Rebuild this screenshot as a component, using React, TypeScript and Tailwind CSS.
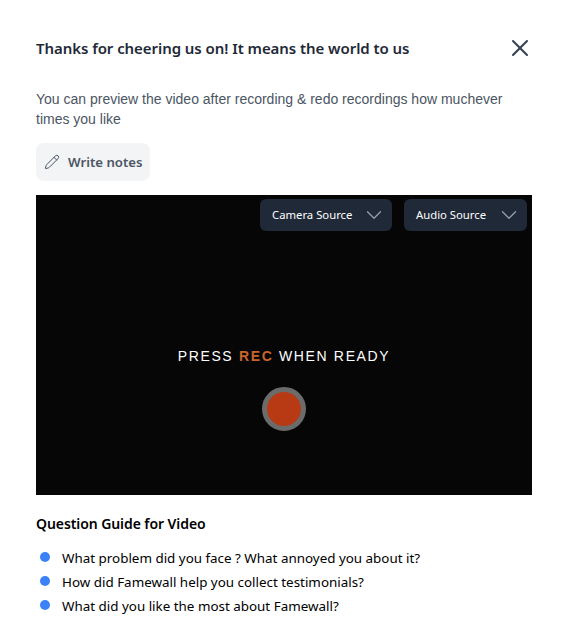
import { X, ChevronDown, Pencil } from "lucide-react";

const questions = [
  "What problem did you face ? What annoyed you about it?",
  "How did Famewall help you collect testimonials?",
  "What did you like the most about Famewall?",
];

function SourceSelect({ label, width }: { label: string; width: string }) {
  return (
    <div className={`flex h-8 items-center justify-between rounded-md bg-[#1f2937] pl-3 pr-[5px] text-white ${width}`}>
      <span className="pt-px text-[11.3px]">{label}</span>
      <ChevronDown size={26} strokeWidth={1.1} className="text-gray-400" />
    </div>
  );
}

export default function App() {
  return (
    <div className="h-[637px] w-[568px] overflow-hidden bg-white px-9 pt-[36px] font-['Noto_Sans',sans-serif]">
      {/* Header */}
      <div className="flex h-6 items-center justify-between">
        <h2 className="text-[15px] font-semibold tracking-[-0.06px] text-[#1f2937]">
          Thanks for cheering us on! It means the world to us
        </h2>
        <X size={28} strokeWidth={1.75} className="-mr-[2px] text-[#374151]" />
      </div>

      <p className="mt-[29px] font-['Liberation_Sans',sans-serif] text-sm leading-[20px] text-[#4b5563]">
        You can preview the video after recording &amp; redo recordings how muchever times you like
      </p>

      <button className="mt-[14px] flex h-[38px] w-[114px] items-center gap-[8px] rounded-lg bg-[#f3f4f6] pl-[8px] text-[13.2px] font-semibold text-[#4b5563]">
        <Pencil size={16} strokeWidth={1.5} />
        <span className="pt-px">Write notes</span>
      </button>

      {/* Video */}
      <div className="relative mt-[14px] flex h-[300px] w-[496px] flex-col items-center bg-[#060606] pt-[152px]">
        <div className="absolute right-[5px] top-[4px] flex gap-3">
          <SourceSelect label="Camera Source" width="w-[132px]" />
          <SourceSelect label="Audio Source" width="w-[123px]" />
        </div>
        <p className="font-['Liberation_Sans',sans-serif] text-sm leading-[18px] tracking-[1.65px] text-white">
          PRESS <span className="font-bold text-[#c8642c]">REC</span> WHEN READY
        </p>
        <div className="mt-[22px] h-11 w-11 rounded-full border-[5px] border-[#6b6b6b] bg-[#b83a14]" />
      </div>

      {/* Question guide */}
      <h3 className="mt-[19px] text-sm font-semibold leading-5 tracking-[-0.08px] text-black">Question Guide for Video</h3>
      <ul className="mt-[14px] flex flex-col gap-1">
        {questions.map((q) => (
          <li key={q} className="flex h-5 items-center text-[13.4px] text-black">
            <span className="mb-[2px] ml-1 mr-3 h-[10px] w-[10px] rounded-full bg-[#3b82f6]" />
            {q}
          </li>
        ))}
      </ul>
    </div>
  );
}
